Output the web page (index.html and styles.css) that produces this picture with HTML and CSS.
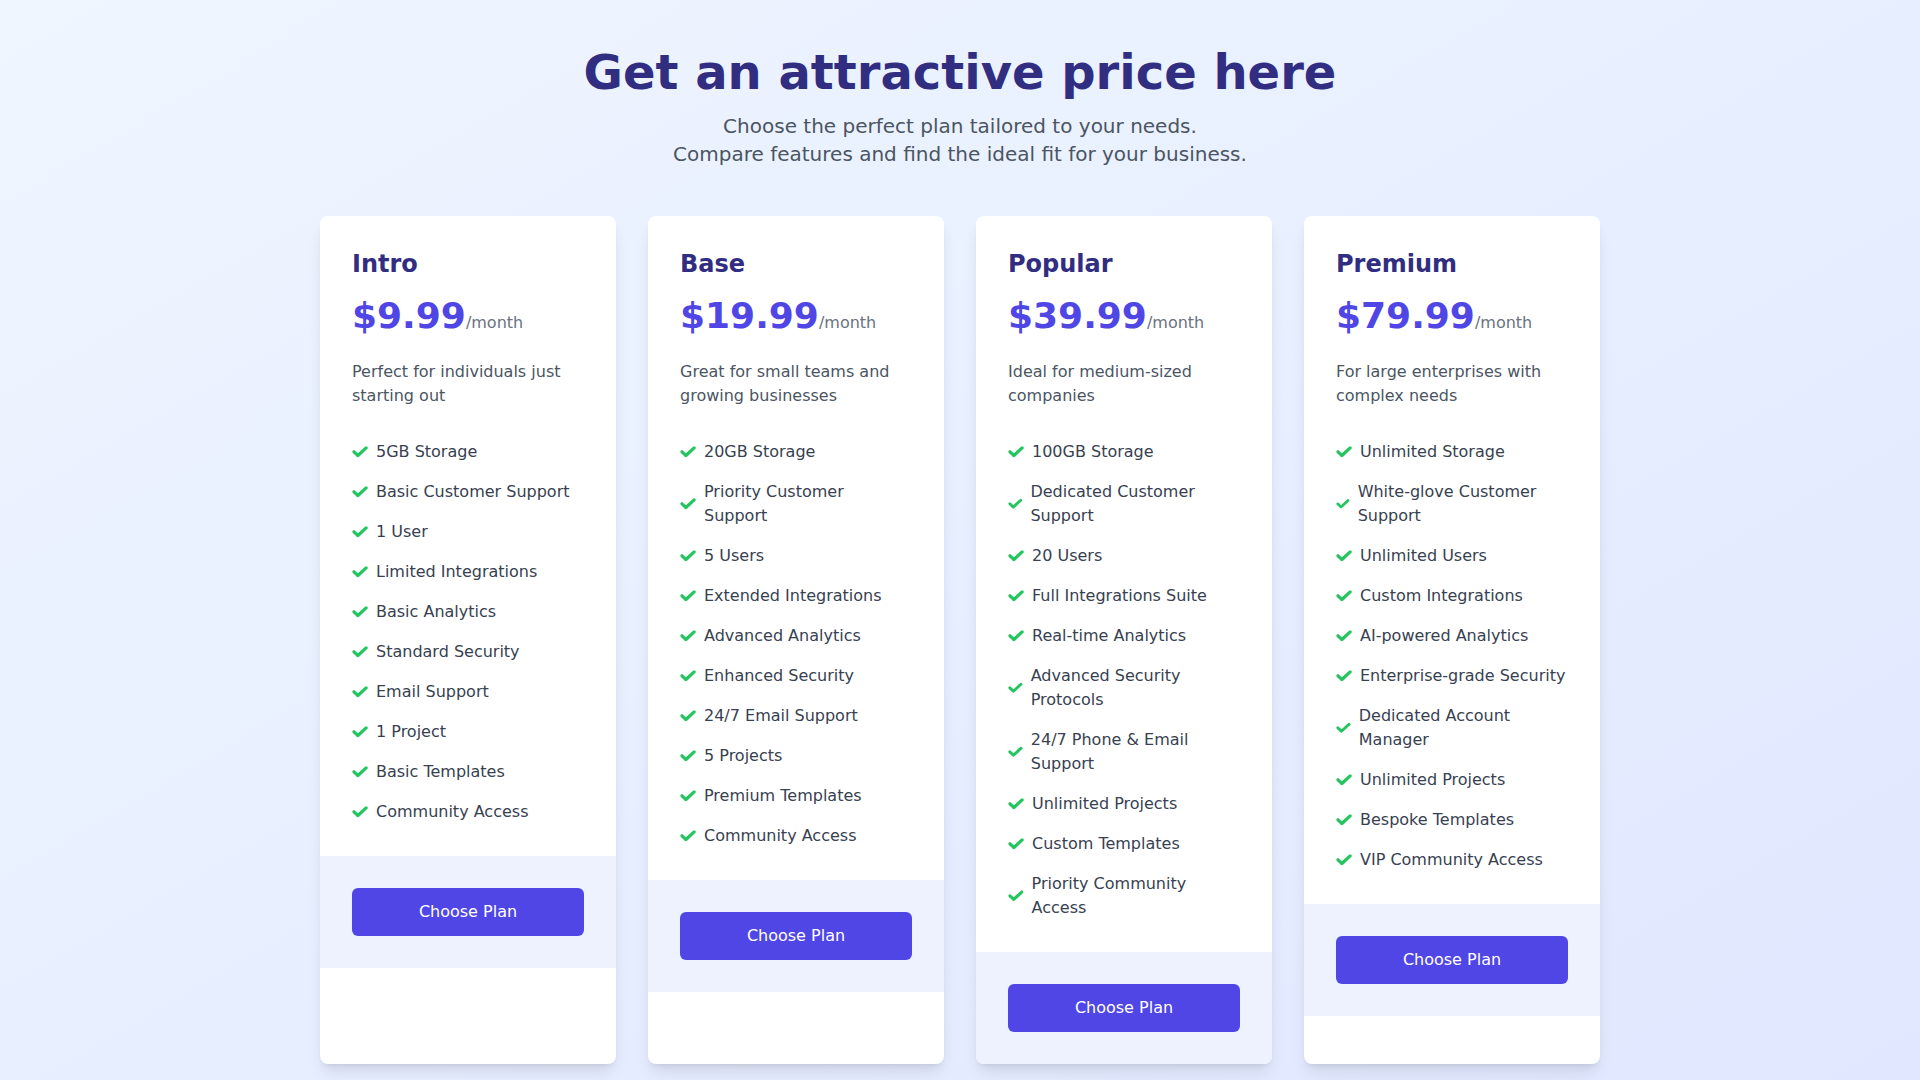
FILE: index.html
```html
<!DOCTYPE html>
<html lang="en">
<head>
<meta charset="utf-8">
<title>Pricing</title>
<link rel="stylesheet" href="styles.css">
</head>
<body>
<main class="page">
  <header class="intro">
    <h1 class="headline">Get an attractive price here</h1>
    <p class="lead">Choose the perfect plan tailored to your needs.<br>Compare features and find the ideal fit for your business.</p>
  </header>

  <section class="plans">
    <article class="plan">
      <div class="plan-body">
        <h2 class="plan-name">Intro</h2>
        <div class="price"><span class="amount">$9.99</span><span class="period">/month</span></div>
        <p class="plan-desc">Perfect for individuals just starting out</p>
        <ul class="features">
          <li><svg class="check" viewBox="0 0 16 16"><path d="M2 7.8 5.9 11.5 14.1 3.9"/></svg><span>5GB Storage</span></li>
          <li><svg class="check" viewBox="0 0 16 16"><path d="M2 7.8 5.9 11.5 14.1 3.9"/></svg><span>Basic Customer Support</span></li>
          <li><svg class="check" viewBox="0 0 16 16"><path d="M2 7.8 5.9 11.5 14.1 3.9"/></svg><span>1 User</span></li>
          <li><svg class="check" viewBox="0 0 16 16"><path d="M2 7.8 5.9 11.5 14.1 3.9"/></svg><span>Limited Integrations</span></li>
          <li><svg class="check" viewBox="0 0 16 16"><path d="M2 7.8 5.9 11.5 14.1 3.9"/></svg><span>Basic Analytics</span></li>
          <li><svg class="check" viewBox="0 0 16 16"><path d="M2 7.8 5.9 11.5 14.1 3.9"/></svg><span>Standard Security</span></li>
          <li><svg class="check" viewBox="0 0 16 16"><path d="M2 7.8 5.9 11.5 14.1 3.9"/></svg><span>Email Support</span></li>
          <li><svg class="check" viewBox="0 0 16 16"><path d="M2 7.8 5.9 11.5 14.1 3.9"/></svg><span>1 Project</span></li>
          <li><svg class="check" viewBox="0 0 16 16"><path d="M2 7.8 5.9 11.5 14.1 3.9"/></svg><span>Basic Templates</span></li>
          <li><svg class="check" viewBox="0 0 16 16"><path d="M2 7.8 5.9 11.5 14.1 3.9"/></svg><span>Community Access</span></li>
        </ul>
      </div>
      <div class="plan-foot"><button class="choose">Choose Plan</button></div>
    </article>

    <article class="plan">
      <div class="plan-body">
        <h2 class="plan-name">Base</h2>
        <div class="price"><span class="amount">$19.99</span><span class="period">/month</span></div>
        <p class="plan-desc">Great for small teams and growing businesses</p>
        <ul class="features">
          <li><svg class="check" viewBox="0 0 16 16"><path d="M2 7.8 5.9 11.5 14.1 3.9"/></svg><span>20GB Storage</span></li>
          <li><svg class="check" viewBox="0 0 16 16"><path d="M2 7.8 5.9 11.5 14.1 3.9"/></svg><span>Priority Customer Support</span></li>
          <li><svg class="check" viewBox="0 0 16 16"><path d="M2 7.8 5.9 11.5 14.1 3.9"/></svg><span>5 Users</span></li>
          <li><svg class="check" viewBox="0 0 16 16"><path d="M2 7.8 5.9 11.5 14.1 3.9"/></svg><span>Extended Integrations</span></li>
          <li><svg class="check" viewBox="0 0 16 16"><path d="M2 7.8 5.9 11.5 14.1 3.9"/></svg><span>Advanced Analytics</span></li>
          <li><svg class="check" viewBox="0 0 16 16"><path d="M2 7.8 5.9 11.5 14.1 3.9"/></svg><span>Enhanced Security</span></li>
          <li><svg class="check" viewBox="0 0 16 16"><path d="M2 7.8 5.9 11.5 14.1 3.9"/></svg><span>24/7 Email Support</span></li>
          <li><svg class="check" viewBox="0 0 16 16"><path d="M2 7.8 5.9 11.5 14.1 3.9"/></svg><span>5 Projects</span></li>
          <li><svg class="check" viewBox="0 0 16 16"><path d="M2 7.8 5.9 11.5 14.1 3.9"/></svg><span>Premium Templates</span></li>
          <li><svg class="check" viewBox="0 0 16 16"><path d="M2 7.8 5.9 11.5 14.1 3.9"/></svg><span>Community Access</span></li>
        </ul>
      </div>
      <div class="plan-foot"><button class="choose">Choose Plan</button></div>
    </article>

    <article class="plan">
      <div class="plan-body">
        <h2 class="plan-name">Popular</h2>
        <div class="price"><span class="amount">$39.99</span><span class="period">/month</span></div>
        <p class="plan-desc">Ideal for medium-sized companies</p>
        <ul class="features">
          <li><svg class="check" viewBox="0 0 16 16"><path d="M2 7.8 5.9 11.5 14.1 3.9"/></svg><span>100GB Storage</span></li>
          <li><svg class="check" viewBox="0 0 16 16"><path d="M2 7.8 5.9 11.5 14.1 3.9"/></svg><span>Dedicated Customer Support</span></li>
          <li><svg class="check" viewBox="0 0 16 16"><path d="M2 7.8 5.9 11.5 14.1 3.9"/></svg><span>20 Users</span></li>
          <li><svg class="check" viewBox="0 0 16 16"><path d="M2 7.8 5.9 11.5 14.1 3.9"/></svg><span>Full Integrations Suite</span></li>
          <li><svg class="check" viewBox="0 0 16 16"><path d="M2 7.8 5.9 11.5 14.1 3.9"/></svg><span>Real-time Analytics</span></li>
          <li><svg class="check" viewBox="0 0 16 16"><path d="M2 7.8 5.9 11.5 14.1 3.9"/></svg><span>Advanced Security Protocols</span></li>
          <li><svg class="check" viewBox="0 0 16 16"><path d="M2 7.8 5.9 11.5 14.1 3.9"/></svg><span>24/7 Phone &amp; Email Support</span></li>
          <li><svg class="check" viewBox="0 0 16 16"><path d="M2 7.8 5.9 11.5 14.1 3.9"/></svg><span>Unlimited Projects</span></li>
          <li><svg class="check" viewBox="0 0 16 16"><path d="M2 7.8 5.9 11.5 14.1 3.9"/></svg><span>Custom Templates</span></li>
          <li><svg class="check" viewBox="0 0 16 16"><path d="M2 7.8 5.9 11.5 14.1 3.9"/></svg><span>Priority Community Access</span></li>
        </ul>
      </div>
      <div class="plan-foot"><button class="choose">Choose Plan</button></div>
    </article>

    <article class="plan">
      <div class="plan-body">
        <h2 class="plan-name">Premium</h2>
        <div class="price"><span class="amount">$79.99</span><span class="period">/month</span></div>
        <p class="plan-desc">For large enterprises with complex needs</p>
        <ul class="features">
          <li><svg class="check" viewBox="0 0 16 16"><path d="M2 7.8 5.9 11.5 14.1 3.9"/></svg><span>Unlimited Storage</span></li>
          <li><svg class="check" viewBox="0 0 16 16"><path d="M2 7.8 5.9 11.5 14.1 3.9"/></svg><span>White-glove Customer Support</span></li>
          <li><svg class="check" viewBox="0 0 16 16"><path d="M2 7.8 5.9 11.5 14.1 3.9"/></svg><span>Unlimited Users</span></li>
          <li><svg class="check" viewBox="0 0 16 16"><path d="M2 7.8 5.9 11.5 14.1 3.9"/></svg><span>Custom Integrations</span></li>
          <li><svg class="check" viewBox="0 0 16 16"><path d="M2 7.8 5.9 11.5 14.1 3.9"/></svg><span>AI-powered Analytics</span></li>
          <li><svg class="check" viewBox="0 0 16 16"><path d="M2 7.8 5.9 11.5 14.1 3.9"/></svg><span>Enterprise-grade Security</span></li>
          <li><svg class="check" viewBox="0 0 16 16"><path d="M2 7.8 5.9 11.5 14.1 3.9"/></svg><span>Dedicated Account Manager</span></li>
          <li><svg class="check" viewBox="0 0 16 16"><path d="M2 7.8 5.9 11.5 14.1 3.9"/></svg><span>Unlimited Projects</span></li>
          <li><svg class="check" viewBox="0 0 16 16"><path d="M2 7.8 5.9 11.5 14.1 3.9"/></svg><span>Bespoke Templates</span></li>
          <li><svg class="check" viewBox="0 0 16 16"><path d="M2 7.8 5.9 11.5 14.1 3.9"/></svg><span>VIP Community Access</span></li>
        </ul>
      </div>
      <div class="plan-foot"><button class="choose">Choose Plan</button></div>
    </article>
  </section>
</main>
</body>
</html>
```

FILE: styles.css
```css
* { box-sizing: border-box; }

html, body {
  margin: 0;
  padding: 0;
}

body {
  font-family: "DejaVu Sans", "Noto Sans", sans-serif;
  background: linear-gradient(to bottom right, #eff6ff, #e0e7ff);
  min-height: 100vh;
  color: #374151;
}

.page {
  padding: 48px 0;
}

.intro {
  text-align: center;
  margin-bottom: 48px;
}

.headline {
  margin: 0 0 16px;
  font-size: 48px;
  line-height: 48px;
  font-weight: 700;
  color: #312e81;
}

.lead {
  margin: 0;
  font-size: 20px;
  line-height: 28px;
  color: #4b5563;
}

.plans {
  max-width: 1280px;
  margin: 0 auto;
  display: grid;
  grid-template-columns: repeat(4, 1fr);
  gap: 32px;
}

.plan {
  background: #ffffff;
  border-radius: 8px;
  overflow: hidden;
  box-shadow: 0 10px 15px -3px rgba(0, 0, 0, 0.1), 0 4px 6px -4px rgba(0, 0, 0, 0.1);
}

.plan-body {
  padding: 32px;
}

.plan-name {
  margin: 0 0 16px;
  font-size: 24px;
  line-height: 32px;
  font-weight: 700;
  color: #312e81;
}

.price {
  display: flex;
  align-items: baseline;
  margin-bottom: 24px;
}

.amount {
  font-size: 36px;
  line-height: 40px;
  font-weight: 700;
  color: #4f46e5;
}

.period {
  font-size: 16px;
  line-height: 24px;
  color: #6b7280;
}

.plan-desc {
  margin: 0 0 32px;
  font-size: 16px;
  line-height: 24px;
  color: #4b5563;
}

.features {
  list-style: none;
  margin: 0;
  padding: 0;
  display: flex;
  flex-direction: column;
  gap: 16px;
}

.features li {
  display: flex;
  align-items: center;
  gap: 8px;
  font-size: 16px;
  line-height: 24px;
  color: #374151;
}

.check {
  width: 16px;
  height: 16px;
  min-width: 0;
  fill: none;
  stroke: #22c55e;
  stroke-width: 3.2;
  stroke-linecap: round;
  stroke-linejoin: round;
}

.plan-foot {
  background: #eef2ff;
  padding: 32px;
}

.choose {
  display: block;
  width: 100%;
  border: 0;
  border-radius: 6px;
  background: #4f46e5;
  color: #ffffff;
  font-family: inherit;
  font-size: 16px;
  line-height: 24px;
  padding: 12px 16px;
  cursor: pointer;
}
```
